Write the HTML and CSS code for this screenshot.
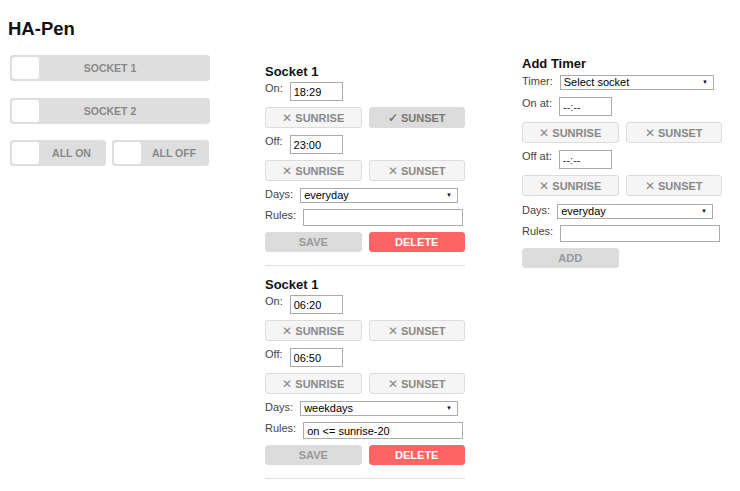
FILE: index.html
```html
<!DOCTYPE html>
<html>
<head>
    <title>HA-Pen</title>
    <link rel="stylesheet" href="styles.css">
</head>
<body>
    <h1 class="title">HA-Pen</h1>

    <div class="layout">
        <div class="switches">
            <div class="toggle toggle-wide"><span class="knob"></span><span class="toggle-label">SOCKET 1</span></div>
            <div class="toggle toggle-wide"><span class="knob"></span><span class="toggle-label">SOCKET 2</span></div>
            <div class="toggle-pair">
                <div class="toggle"><span class="knob"></span><span class="toggle-label">ALL ON</span></div>
                <div class="toggle"><span class="knob"></span><span class="toggle-label">ALL OFF</span></div>
            </div>
        </div>

        <div class="timers">
            <div class="timer">
                <h2>Socket 1</h2>
                <div class="field"><label>On:</label><input type="text" class="time" value="18:29"></div>
                <div class="btn-row">
                    <button class="btn"><span class="mark">&#x2715;</span> SUNRISE</button>
                    <button class="btn on"><span class="mark">&#x2713;</span> SUNSET</button>
                </div>
                <div class="field"><label>Off:</label><input type="text" class="time" value="23:00"></div>
                <div class="btn-row">
                    <button class="btn"><span class="mark">&#x2715;</span> SUNRISE</button>
                    <button class="btn"><span class="mark">&#x2715;</span> SUNSET</button>
                </div>
                <div class="field"><label>Days:</label>
                    <span class="select"><select><option>everyday</option><option>weekdays</option><option>weekends</option></select></span>
                </div>
                <div class="field field-tight"><label>Rules:</label><input type="text" class="rules" value=""></div>
                <div class="actions">
                    <button class="btn btn-grey">SAVE</button>
                    <button class="btn btn-delete">DELETE</button>
                </div>
            </div>

            <div class="timer">
                <h2>Socket 1</h2>
                <div class="field"><label>On:</label><input type="text" class="time" value="06:20"></div>
                <div class="btn-row">
                    <button class="btn"><span class="mark">&#x2715;</span> SUNRISE</button>
                    <button class="btn"><span class="mark">&#x2715;</span> SUNSET</button>
                </div>
                <div class="field"><label>Off:</label><input type="text" class="time" value="06:50"></div>
                <div class="btn-row">
                    <button class="btn"><span class="mark">&#x2715;</span> SUNRISE</button>
                    <button class="btn"><span class="mark">&#x2715;</span> SUNSET</button>
                </div>
                <div class="field"><label>Days:</label>
                    <span class="select"><select><option>weekdays</option><option>everyday</option><option>weekends</option></select></span>
                </div>
                <div class="field field-tight"><label>Rules:</label><input type="text" class="rules" value="on &lt;= sunrise-20"></div>
                <div class="actions">
                    <button class="btn btn-grey">SAVE</button>
                    <button class="btn btn-delete">DELETE</button>
                </div>
            </div>
        </div>

        <div class="add-timer">
            <h2>Add Timer</h2>
            <div class="field field-first"><label>Timer:</label>
                <span class="select select-wide"><select><option>Select socket</option><option>Socket 1</option><option>Socket 2</option></select></span>
            </div>
            <div class="field"><label>On at:</label><input type="text" class="time" placeholder="--:--"></div>
            <div class="btn-row">
                <button class="btn"><span class="mark">&#x2715;</span> SUNRISE</button>
                <button class="btn"><span class="mark">&#x2715;</span> SUNSET</button>
            </div>
            <div class="field"><label>Off at:</label><input type="text" class="time" placeholder="--:--"></div>
            <div class="btn-row">
                <button class="btn"><span class="mark">&#x2715;</span> SUNRISE</button>
                <button class="btn"><span class="mark">&#x2715;</span> SUNSET</button>
            </div>
            <div class="field field-days"><label>Days:</label>
                <span class="select select-days"><select><option>everyday</option><option>weekdays</option><option>weekends</option></select></span>
            </div>
            <div class="field field-tight"><label>Rules:</label><input type="text" class="rules" value=""></div>
            <div class="actions">
                <button class="btn btn-grey">ADD</button>
            </div>
        </div>
    </div>
</body>
</html>
```

FILE: styles.css
```css
body {
    margin: 8px;
    background-color: #fff;
    font-family: "Liberation Sans", Arial, sans-serif;
    font-size: 11px;
    color: #444;
}
.title {
    font-size: 18.5px;
    line-height: 21px;
    margin: 10px 0 0;
    color: #111;
}
.layout {
    display: grid;
    grid-template-columns: 257px 257px 200px;
    align-items: start;
    margin-top: 16px;
}

/* switches on the left */
.switches {
    padding-left: 2px;
}
.toggle {
    display: flex;
    box-sizing: border-box;
    width: 200px;
    height: 26px;
    padding: 2px;
    margin-bottom: 17px;
    background-color: #dedede;
    border-radius: 3px;
}
.knob {
    width: 27px;
    height: 22px;
    background-color: #fff;
    border-radius: 3px;
}
.toggle-label {
    flex: 1;
    text-align: center;
    line-height: 22px;
    font-size: 10.5px;
    font-weight: bold;
    color: #888;
}
.toggle-wide .toggle-label {
    padding-right: 27px;
}
.toggle-pair {
    display: flex;
    gap: 6px;
    margin-top: -1px;
}
.toggle-pair .toggle {
    width: 96px;
    margin: 0;
}
.toggle-pair .toggle + .toggle {
    width: 97px;
}

/* timer blocks */
.timers {
    width: 200px;
    padding-top: 9px;
}
.timer {
    border-bottom: 1px solid #e0e0e0;
    padding-bottom: 13px;
    margin-bottom: 11px;
}
h2 {
    font-size: 13px;
    line-height: 15px;
    margin: 0;
    color: #111;
}
.add-timer {
    width: 200px;
    padding-top: 1px;
}
.field {
    display: flex;
    align-items: flex-start;
    margin-top: 7px;
}
h2 + .field {
    margin-top: 3px;
}
.add-timer h2 + .field-first {
    margin-top: 4px;
}
.field-tight {
    margin-top: 6px;
}
.field-days {
    margin-top: 8px;
}
.field label {
    line-height: 11px;
    margin: 1px 7px 0 0;
    white-space: nowrap;
}
input {
    box-sizing: border-box;
    margin: 0;
    border: 1px solid #ababab;
    border-radius: 0;
    padding: 0 3px;
    font-family: "Liberation Sans", Arial, sans-serif;
    font-size: 11px;
    color: #000;
    outline: none;
}
input::placeholder {
    color: #333;
}
.time {
    width: 53px;
    height: 19px;
}
.rules {
    flex: 1;
    min-width: 0;
    height: 17px;
    margin-right: 2px;
}
.select {
    position: relative;
    flex: 1;
    margin-right: 7px;
}
.select-wide {
    margin-right: 8px;
}
.select-days {
    margin-right: 9px;
}
.select select {
    display: block;
    box-sizing: border-box;
    width: 100%;
    height: 15px;
    margin: 0;
    padding: 0 3px;
    border: 1px solid #ababab;
    border-radius: 0;
    background-color: #fff;
    font-family: "Liberation Sans", Arial, sans-serif;
    font-size: 11px;
    line-height: 13px;
    color: #000;
    appearance: none;
    -webkit-appearance: none;
    outline: none;
}
.select::after {
    content: "\25BC";
    position: absolute;
    right: 6px;
    top: 4px;
    font-size: 6px;
    line-height: 6px;
    color: #111;
    pointer-events: none;
}

/* buttons */
.btn-row, .actions {
    display: grid;
    grid-template-columns: 1fr 1fr;
    gap: 7px;
    margin-top: 6px;
}
.btn {
    box-sizing: border-box;
    height: 21px;
    padding: 0;
    border: 1px solid #dcdcdc;
    border-radius: 3px;
    background-color: #f5f5f5;
    font-family: "Liberation Sans", Arial, sans-serif;
    font-size: 11px;
    font-weight: bold;
    color: #888;
    cursor: pointer;
}
.btn .mark {
    font-weight: normal;
    font-size: 12px;
}
.btn.on {
    background-color: #dcdcdc;
    color: #777;
}
.btn.on .mark {
    font-weight: bold;
}
.actions .btn {
    height: 20px;
}
.btn-grey {
    background-color: #dcdcdc;
    border-color: #dcdcdc;
    color: #999;
}
.btn-delete {
    background-color: #ff6464;
    border-color: #ff6464;
    color: #fff;
}
```
